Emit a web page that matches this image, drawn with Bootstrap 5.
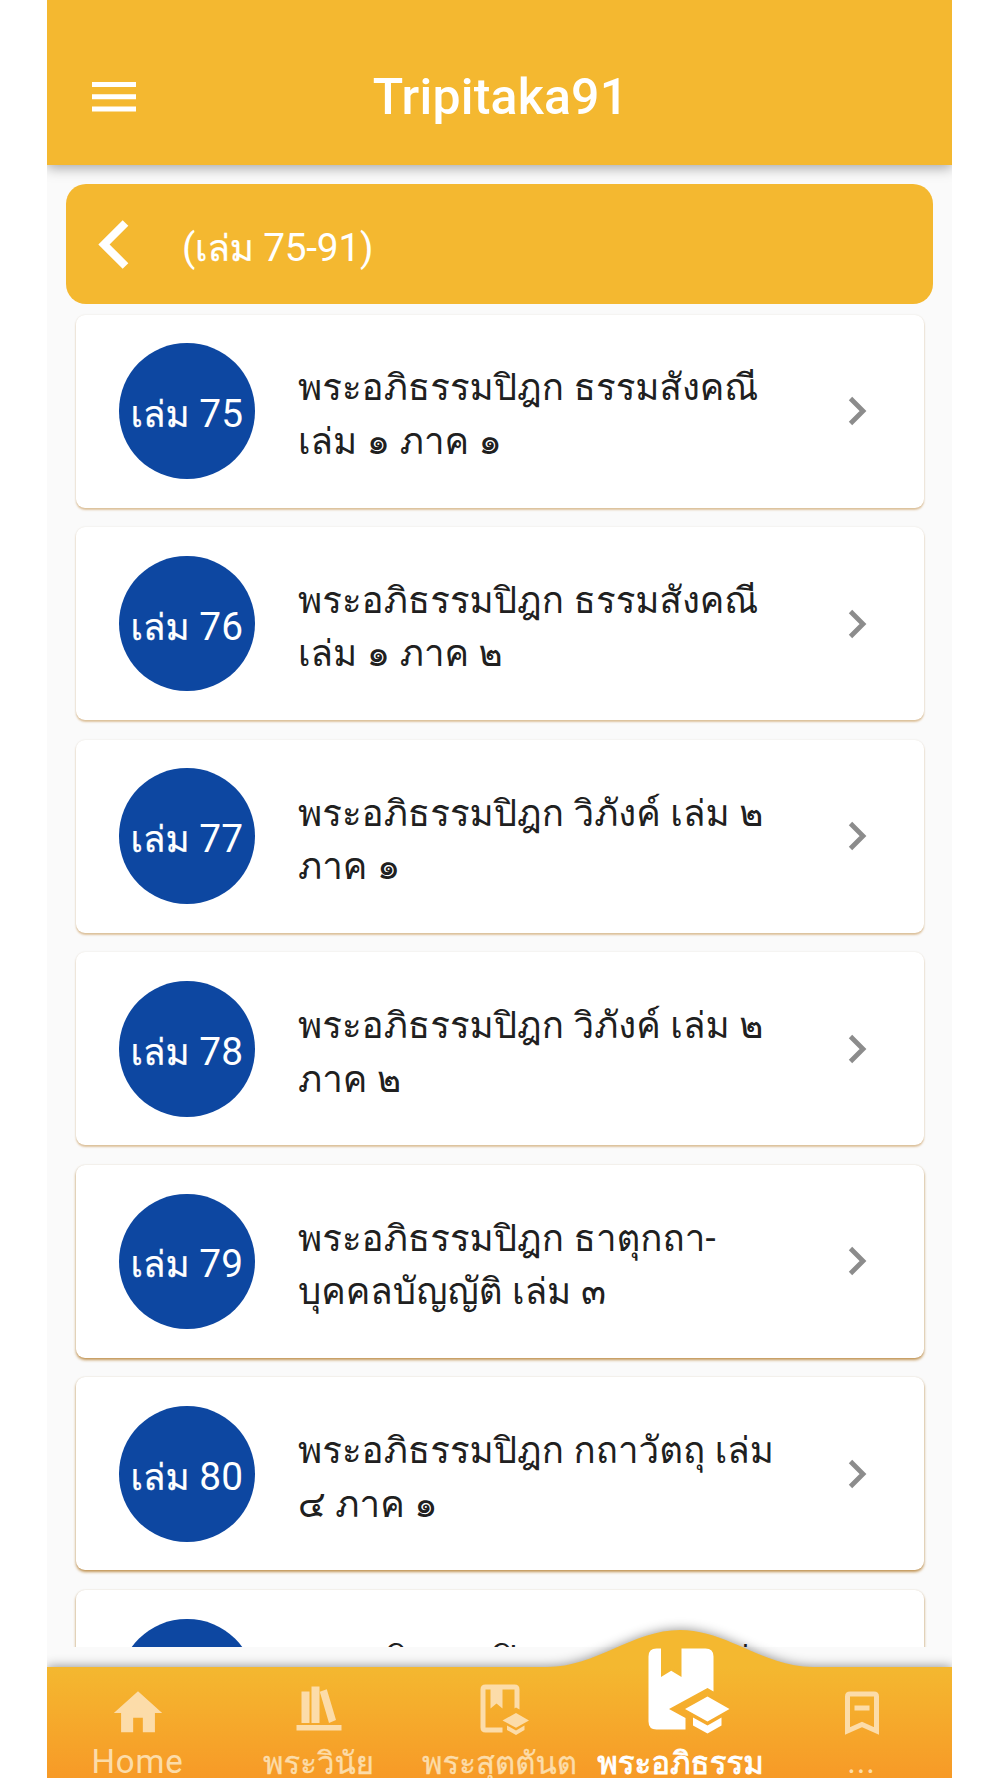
<!DOCTYPE html>
<html lang="th">
<head>
<meta charset="utf-8">
<meta name="viewport" content="width=device-width, initial-scale=1">
<title>Tripitaka91</title>
<link href="https://cdn.jsdelivr.net/npm/bootstrap@5.3.0/dist/css/bootstrap.min.css" rel="stylesheet">
<style>
  body { font-family: Roboto, Loma, "Noto Sans", sans-serif; background: #fff; overflow: hidden; }
  .phone { width: 905px; height: 1778px; margin-left: 47px; background: #fafafa; overflow: hidden; }
  .app-bar { height: 164.5px; padding: 29px 45px 0; background: #f4b830; box-shadow: 0 3px 12px rgba(0,0,0,.34); z-index: 2; }
  .app-title { font-size: 50px; font-weight: 500; line-height: 60px; letter-spacing: .2px; padding-left: 2px; }
  .volume-bar { height: 120.5px; margin: 19px 19px 0; padding-left: 32px; border-radius: 20px; background: #f4b830; font-size: 38.8px; gap: 53px; }
  .volume-bar svg { margin-top: 1px; }
  .volume-bar > span { padding-top: 8px; letter-spacing: -.2px; }
  .thai { font-size: 36.7px; -webkit-text-stroke: .25px currentColor; }
  .book-list { height: 1343px; padding: 10.5px 28.5px 0 29px; overflow: hidden; }
  .book { height: 193px; margin-bottom: 19.6px; padding-left: 43px; padding-right: 47px; border: 0; border-radius: 9px; box-shadow: 0 2px 2px rgba(190,130,50,.45), 0 0 2px rgba(120,90,40,.14); flex: none; }
  .book:nth-child(n+5) { box-shadow: 0 2px 3px rgba(175,115,30,.75), 0 0 2px rgba(120,90,40,.14); }
  .book-no { width: 135.5px; height: 135.5px; background: #0d47a1; font-size: 38.8px; line-height: 1; padding-top: 7px; flex: none; }
  .book-name { width: 490px; margin-left: 43.5px; font-size: 36.7px; line-height: 53.3px; color: #202020; padding-top: 7.5px; word-spacing: .5px; }
  .book:last-child .book-name { padding-top: 0; }
  .tabs { height: 111px; margin-top: 20px; }
  .tabs-bg { position: absolute; left: 0; top: -57px; width: 905px; height: 168px; filter: drop-shadow(0 0 6px rgba(0,0,0,.45)); }
  .tab { width: 181px; padding-top: 16.5px; color: #fcdca9; white-space: nowrap; }
  .tab svg { width: 58px; height: 58px; overflow: visible; }
  .tab-name { font-size: 31.2px; line-height: 36px; margin-top: 4px; -webkit-text-stroke: .3px currentColor; }
  .latin { font-size: 33px; letter-spacing: .8px; margin-top: 2px; -webkit-text-stroke: 0; }
  .tab.active { color: #fff; }
  .tab.active .tab-name { -webkit-text-stroke: .8px #fff; }
</style>
</head>
<body>
<div class="phone d-flex flex-column">
  <header class="app-bar position-relative d-flex align-items-center text-white">
    <svg width="44" height="30" fill="#fff"><path d="M0 0h44v5H0zM0 12.3h44v5H0zM0 24.5h44v5H0z"/></svg>
    <div class="app-title flex-grow-1 text-center">Tripitaka91</div>
    <svg width="44" height="30"></svg>
  </header>
  <div class="volume-bar d-flex align-items-center text-white">
    <svg width="31" height="49" fill="none" stroke="#fff" stroke-width="8"><path d="M27.5 3L6 24.5 27.5 46"/></svg>
    <span>(<span class="thai">เล่ม</span> 75-91)</span>
  </div>
  <main class="book-list" id="books"></main>
  <nav class="tabs position-relative d-flex">
    <svg class="tabs-bg" viewBox="0 -57 905 168">
      <defs><linearGradient id="amber" gradientUnits="userSpaceOnUse" x1="0" y1="0" x2="0" y2="111"><stop offset="0" stop-color="#f4b830"/><stop offset="1" stop-color="#f79a27"/></linearGradient></defs>
      <path fill="url(#amber)" d="M0 0H500C549 0 586-37 633-37S717 0 766 0H905V125H0z"/>
    </svg>
    <div class="tab position-relative d-flex flex-column align-items-center">
      <svg viewBox="0 0 24 24" fill="currentColor"><path d="M10 20v-6h4v6h5v-8h3L12 3 2 12h3v8z"/></svg>
      <div class="tab-name latin">Home</div>
    </div>
    <div class="tab position-relative d-flex flex-column align-items-center">
      <svg viewBox="289.5 1683.5 58 58" fill="currentColor"><path d="M301 1691h8v31.500h-8zM311 1686h8v36.500h-8zM319.300 1691.200l7-2.500 9.200 30.800-7 3zM296 1724.500h45v5.500h-45z"/></svg>
      <div class="tab-name">พระวินัย</div>
    </div>
    <div class="tab position-relative d-flex flex-column align-items-center">
      <svg viewBox="470.500 1683.500 58 58" fill="currentColor"><path d="M485 1684h29q5 0 5 5v20l-3.500-2-1.500 1v-19h-12v19l-6-5-6 5v-19h-5v38h17v5h-17q-5 0-5-5v-38q0-5 5-5zM502 1720l13.500-7.500 13 7.500-13 7.200zM506.500 1725l9 5 8.500-5v4.500l-8.500 5-9-5z"/></svg>
      <div class="tab-name">พระสุตตันต</div>
    </div>
    <div class="tab active position-relative d-flex flex-column align-items-center">
      <svg viewBox="651.500 1683.500 58 58" fill="currentColor"><path d="M656 1648h4.500v28.500l10.200-6.300 10.300 6.300V1648h24q8 0 8 8v35l-6-3.500-38.500 21 16.500 9V1729h-29q-8 0-8-8v-65q0-8 8-8zM684.500 1708.500l22.500-12.500 22 12.500-22 12.500zM692.500 1717l14.500 8 14-8v8l-14 8-14.500-8z"/></svg>
      <div class="tab-name">พระอภิธรรม</div>
    </div>
    <div class="tab position-relative d-flex flex-column align-items-center">
      <svg viewBox="833 1683.500 58 58"><path fill="none" stroke="currentColor" stroke-width="5" d="M847.500 1730.500V1696q0-2.500 2.500-2.500h24q2.500 0 2.500 2.500v34.500l-14.500-6.500z"/><path fill="currentColor" d="M854.500 1705h15v5h-15z"/></svg>
      <div class="tab-name latin">...</div>
    </div>
  </nav>
</div>
<script>
  const books = [
    [75, 'พระอภิธรรมปิฎก ธรรมสังคณี', 'เล่ม ๑ ภาค ๑'],
    [76, 'พระอภิธรรมปิฎก ธรรมสังคณี', 'เล่ม ๑ ภาค ๒'],
    [77, 'พระอภิธรรมปิฎก วิภังค์ เล่ม ๒', 'ภาค ๑'],
    [78, 'พระอภิธรรมปิฎก วิภังค์ เล่ม ๒', 'ภาค ๒'],
    [79, 'พระอภิธรรมปิฎก ธาตุกถา-', 'บุคคลบัญญัติ เล่ม ๓'],
    [80, 'พระอภิธรรมปิฎก กถาวัตถุ เล่ม', '๔ ภาค ๑'],
    [81, 'พระอภิธรรมปิฎก กถาวัตถุ เล่ม', '๔ ภาค ๒']
  ];
  document.getElementById('books').innerHTML = books.map(([no, a, b]) => `
    <div class="card book flex-row align-items-center">
      <div class="book-no rounded-circle text-white d-flex align-items-center justify-content-center"><div class="text-nowrap"><span class="thai">เล่ม</span> ${no}</div></div>
      <div class="book-name text-nowrap">${a}<br>${b}</div>
      <svg class="ms-auto" width="29" height="30" fill="none" stroke="#8c8c8c" stroke-width="4.800"><path d="M2.500 2.500L15 15 2.500 27.500"/></svg>
    </div>`).join('');
</script>
<script src="https://cdn.jsdelivr.net/npm/bootstrap@5.3.0/dist/js/bootstrap.bundle.min.js"></script>
</body>
</html>
